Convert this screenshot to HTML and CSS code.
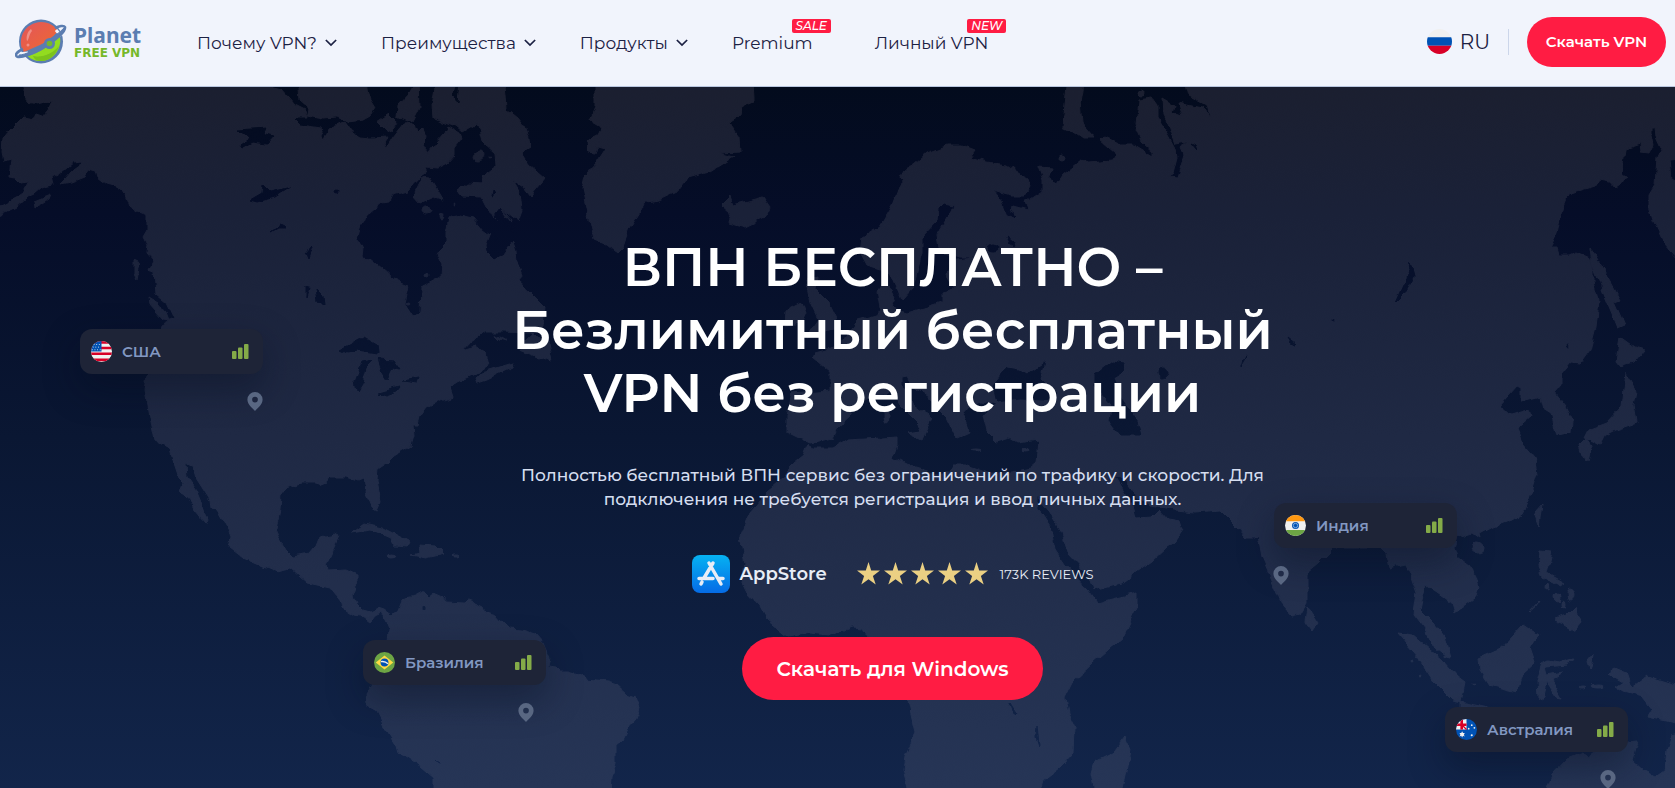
FILE: index.html
```html
<!DOCTYPE html>
<html lang="ru">
<head>
    <meta charset="UTF-8">
    <meta name="viewport" content="width=device-width, initial-scale=1.0">
    <title>Planet Free VPN</title>
    <link rel="stylesheet" href="styles.css">
</head>
<body>
    <!-- HEADER -->
    <header class="header">
        <a href="#" class="logo">
            <svg class="logo-icon" viewBox="0 0 52 46" aria-hidden="true">
                <defs>
                    <linearGradient id="planetRed" x1="0" y1="0" x2="1" y2="1">
                        <stop offset="0" stop-color="#e2555c"/>
                        <stop offset="1" stop-color="#ef6a2e"/>
                    </linearGradient>
                </defs>
                <circle cx="26" cy="22.500" r="22" fill="#5b7db1"/>
                <path d="M7 30C3 18 10 4 26 3C34 3 40 7 43 12L34 22L9 33Z" fill="url(#planetRed)"/>
                <path d="M12 36L35 24L45 18C47 30 38 42 26 42C20 42 15 40 12 36Z" fill="#93dc20"/>
                <path d="M18 37C28 39 38 34 44 27C41 36 34 42 26 42C22 42 19 40 18 37Z" fill="#7cc31c"/>
                <path d="M15 34C28 38 38 31 42 25" fill="none" stroke="#93dc20" stroke-width="4"/>
                <path d="M16 10C12 13 11 18 12 22C14 21 14 15 17 12Z" fill="#f08f86"/>
                <circle cx="13" cy="26" r="1.500" fill="#f08f86"/>
                <path d="M3 35L13 34M46 17L41 11" fill="none" stroke="#f1f4fc" stroke-width="3"/>
                <path d="M8 30C1 33 -1 37 3 38C9 39 22 32 32 26C42 20 51 12 50 8C49 6 44 7 40 9" fill="none" stroke="#5b7db1" stroke-width="2.500"/>
                <path d="M4 38C14 38 26 32 34 26C42 20 49 13 50 8C44 15 34 20 28 25C20 31 10 36 4 36Z" fill="#5b7db1" stroke="#5b7db1"/>
                <circle cx="34.500" cy="24.500" r="5.500" fill="#5b7db1"/>
                <circle cx="34.500" cy="24.500" r="2.800" fill="#76b82a"/>
            </svg>
            <span class="logo-text">
                <span class="logo-name">Planet</span>
                <span class="logo-sub">FREE VPN</span>
            </span>
        </a>
        <nav class="nav">
            <a href="#" class="nav-link">Почему VPN?
                <svg class="chevron" viewBox="0 0 14 9"><path d="M1 1L7 7L13 1"/></svg>
            </a>
            <a href="#" class="nav-link">Преимущества
                <svg class="chevron" viewBox="0 0 14 9"><path d="M1 1L7 7L13 1"/></svg>
            </a>
            <a href="#" class="nav-link">Продукты
                <svg class="chevron" viewBox="0 0 14 9"><path d="M1 1L7 7L13 1"/></svg>
            </a>
            <a href="#" class="nav-link nav-link-badge">Premium<span class="badge">SALE</span></a>
            <a href="#" class="nav-link nav-link-badge">Личный VPN<span class="badge">NEW</span></a>
        </nav>
        <div class="header-right">
            <button type="button" class="lang">
                <svg class="lang-flag" viewBox="0 0 24 24" aria-hidden="true">
                    <clipPath id="round"><circle cx="12" cy="12" r="12"/></clipPath>
                    <g clip-path="url(#round)">
                        <path d="M0 0H24V8H0Z" fill="#f0f0f0"/>
                        <path d="M0 8H24V16H0Z" fill="#0052b4"/>
                        <path d="M0 16H24V24H0Z" fill="#d80027"/>
                    </g>
                </svg>
                RU
            </button>
            <a href="#" class="button button-small">Скачать VPN</a>
        </div>
    </header>

    <!-- HERO -->
    <main class="hero">
        <svg class="map" viewBox="0 87 1675 701" preserveAspectRatio="xMidYMin slice" aria-hidden="true">
            <defs>
                <linearGradient id="sea" gradientUnits="userSpaceOnUse" x1="0" y1="87" x2="0" y2="788">
                    <stop offset="0" stop-color="#030b1d"/>
                    <stop offset=".18" stop-color="#050d28"/>
                    <stop offset=".5" stop-color="#0a1733"/>
                    <stop offset="1" stop-color="#12254a"/>
                </linearGradient>
                <linearGradient id="land" gradientUnits="userSpaceOnUse" x1="0" y1="87" x2="0" y2="788">
                    <stop offset="0" stop-color="#1b1f30"/>
                    <stop offset=".18" stop-color="#1a2138"/>
                    <stop offset=".5" stop-color="#1f2944"/>
                    <stop offset="1" stop-color="#263556"/>
                </linearGradient>
                <!-- roughens the coast line -->
                <filter id="coast" filterUnits="userSpaceOnUse" x="-10" y="77" width="1695" height="721" color-interpolation-filters="sRGB">
                    <feTurbulence type="fractalNoise" baseFrequency=".09" numOctaves="2" seed="4"/>
                    <feDisplacementMap in="SourceGraphic" scale="7" xChannelSelector="R" yChannelSelector="G"/>
                </filter>
            </defs>
            <rect x="0" y="87" width="1675" height="701" fill="url(#sea)"/>
            <g class="land" filter="url(#coast)">
                <!-- the Americas -->
                <path d="M25 77L25 97L29 102L37 104L52 101L48 110L42 117L36 115L34 119L23 117L12 128L3 138L2 152L4 161L11 159L9 177L16 178L20 182L29 181L21 195L-2 207V216L16 207L27 197L34 194L41 188L54 185L52 177L62 172L73 163L80 162L81 165L71 172L61 184L71 182L84 177L89 168L96 170L98 177L107 184L118 187L127 195L132 208L137 212L147 216L147 230L143 237L147 245L146 252L153 260L148 270L154 272L155 283L156 294L167 303L174 318L160 325L157 345L147 375L145 390L150 417L155 440L170 448L173 460L179 478L184 483L181 492L189 498L194 510L205 523L208 521L203 507L196 490L187 477L186 463L193 467L196 478L210 500L211 507L219 512L229 530L231 538L229 547L242 557L261 565L278 572L291 569L307 583L330 588L341 602L342 607L354 615L362 616L370 622L375 615L381 612L386 622L389 630L388 643L380 665L372 685L366 695L367 703L375 708L385 727L396 745L398 752L421 767L434 778V798H611L612 777L616 763V745L622 740L627 730L636 720L639 708L635 697L627 694L617 685L608 682L585 680L582 675L568 671L560 671L556 667L547 666L549 657L543 643L535 634L522 630L510 629L501 622L495 615L486 612L484 607L476 603L468 600L465 603L446 602L442 597L433 593L430 598L424 592L415 597L402 600L398 610L392 615L385 610L379 608L370 612L363 610L356 603L353 597L358 580V574L347 569L328 570L327 565L332 555L335 545L339 536L335 534L320 537L316 547L311 553L292 556L286 550L279 538L276 528L280 510L281 495L286 488L303 482L316 482L322 485L327 483L329 477L347 477L358 481L363 479L366 485L365 492L372 508L377 511L381 502L377 480L378 468L387 462L394 455L410 445L413 435L412 425L418 425L420 417L427 407L438 402L452 397L449 388L457 382L477 373L488 365L485 352L476 346L463 350L470 342L485 332L503 332L530 333L548 343L552 362L540 358L520 350L525 342L543 325L545 307L535 297L530 292L519 282L522 275L517 262L516 250L513 241L503 255L494 260L487 253L486 245L490 235L483 230L473 218L457 214L450 218L447 232V242L437 252L442 262L441 277L422 287L421 312L413 317L404 303L408 285L395 280L382 268L372 260L361 259L362 247L356 240L360 227L370 213L382 203L389 202L392 195L407 191L422 175L427 172L425 167L437 168L447 163L454 155V148L462 138L460 133L448 126L445 133L437 142L428 153L424 148L426 135L423 128L418 133L415 123L403 124L393 137L387 147L384 143L388 137L370 138L360 137L352 132L345 122L330 128L325 140L320 128L300 125L295 120L298 117L307 117L305 110L295 105L288 97L282 90L265 86V77Z"/>
                <path d="M298 77L300 100L308 107L307 115L322 118L337 117L348 122L363 120L372 115L376 108L368 95L365 77Z"/>
                <path d="M377 122L389 114L397 122L392 130L387 132L382 127Z"/>
                <path d="M418 77L410 92L398 105L397 118L407 122L413 120L419 108Z"/>
                <path d="M437 77L432 105L433 117L443 122L457 127L463 132L478 123L483 142L495 153L496 165L483 175L482 184L467 183L458 190L463 196L480 197L485 207L497 218L510 226L512 220L502 208L518 221L522 210L520 192L513 180L523 187L530 196L545 178L530 165L522 153L530 148L529 138L525 128L517 118L507 110L506 95L504 77Z"/>
                <path d="M422 177L430 178L443 200L433 197L420 203L413 195Z"/>
                <ellipse cx="479" cy="156" rx="6" ry="5"/>
                <ellipse cx="427" cy="210" rx="5" ry="3"/>
                <ellipse cx="441" cy="217" rx="2" ry="3"/>
                <ellipse cx="426" cy="275" rx="2" ry="2"/>
                <ellipse cx="408" cy="303" rx="2" ry="1"/>
                <circle cx="454" cy="205" r="1"/>
                <circle cx="490" cy="157" r="1"/>
                <path d="M476 378L483 372L513 363L512 368L487 380L478 383Z"/>
                <path d="M495 335L507 342L500 340Z"/>
                <path d="M148 297L158 303L166 312L169 320L163 319L149 303Z"/>
                <path d="M134 260L140 263L137 279L134 273Z"/>
                <path d="M35 201L50 195L48 200L36 208Z"/>
                <path d="M351 532L364 523L381 527L410 542L408 546L394 545L391 538L370 529Z"/>
                <path d="M410 555L419 553L418 545L436 546L444 554L426 558Z"/>
                <ellipse cx="392" cy="556" rx="5" ry="2"/>
                <ellipse cx="456" cy="556" rx="4" ry="1"/>
                <!-- Greenland and Iceland -->
                <path d="M595 77L595 108L590 120L602 127L598 135L587 140L588 152L596 153L598 146L606 148L597 162L585 175L582 188L587 212L593 238L607 244L618 253L623 248L630 228L640 212L645 202L660 200L677 192L688 178L710 172L734 157L719 153L740 152L739 137L729 123L740 116L742 105L754 100L753 77Z"/>
                <path d="M722 205L730 197L733 205L748 201L764 197L771 207L766 217L745 227L728 222L731 213Z"/>
                <!-- Eurasia and Africa -->
                <path d="M860 252L862 238L880 227L893 205L902 182L900 177L905 168L913 165L927 153L947 145L962 145L975 150L970 157L987 162L1007 165L1027 178L1030 187L1025 195L1010 195L992 190L1002 202L1007 215L1015 218L1018 215L1010 210L1013 206L1028 210L1025 202L1043 190V180L1038 167L1052 168L1048 180L1057 184L1063 175L1082 160L1089 162L1113 160L1115 153L1100 140L1105 138L1120 145L1133 145L1153 157L1153 152L1142 142L1135 125L1138 100L1152 98L1157 105V118L1168 135L1175 148L1177 157L1173 173L1168 177L1178 178L1185 155L1182 148L1187 142L1175 144L1168 125L1163 115L1162 98L1174 105L1172 113L1183 117L1178 102L1203 107L1210 117L1207 105L1188 95L1183 77H1690V158L1670 160L1672 180L1690 192V272L1664 243L1653 220L1649 208V195L1655 185L1657 157L1661 148L1656 137L1655 127L1651 127V135L1653 145L1649 153L1641 152L1640 143L1625 148L1622 173L1628 178L1615 187L1611 182L1599 180L1595 186L1567 195L1563 205L1557 233L1550 248L1558 248L1560 255L1569 255L1576 252L1590 258L1594 272V283L1599 300L1596 327L1590 350L1580 364L1571 363L1561 375V385L1554 393L1565 407L1572 420L1571 433L1557 436L1551 413L1543 408L1540 397L1521 402V388L1517 386L1500 405L1511 415L1528 410L1530 417L1517 428L1523 443L1535 457L1538 473L1530 498L1525 510L1512 520L1492 527L1479 534L1480 538L1473 533L1458 537L1455 548L1458 557L1473 568L1479 587L1475 598L1455 613L1452 603L1438 593L1426 585L1422 600L1420 610L1432 622L1445 637L1451 658L1447 657L1430 643L1427 630L1414 613L1417 593L1410 573L1405 564L1390 568L1387 555L1380 548H1333L1318 563L1307 572V603L1300 615L1292 617L1283 607L1272 580L1262 557L1258 535L1255 538L1247 538L1238 528L1228 518L1220 510L1195 512L1175 510L1162 507L1148 505L1133 492L1123 478L1115 477L1123 490L1133 507L1136 518L1153 517L1160 510L1168 519L1180 521L1183 530L1175 542L1167 547L1153 560L1120 583L1093 590L1087 573L1068 553L1062 533L1048 510L1037 495L1037 507L1050 527L1055 550L1065 565L1088 590L1097 603L1137 593V607L1123 637L1093 663L1073 682L1065 698L1068 715L1074 727L1073 753L1060 767L1043 780L1038 798H910L903 770L905 757L916 733L912 717L908 700L885 665L868 637L863 628L853 627L830 635L810 633L788 637L767 620L760 607L747 593L742 583L745 563L740 537L750 513L767 493L783 480L793 463L803 455L807 445L813 448L833 448L847 440L897 437V445L893 457L913 467L933 473L950 473L953 465L967 465L987 472L1013 472L1030 468L1037 462L1039 440L1018 443L1010 438L997 442L987 432L983 415L997 405L980 402L962 412L970 433L957 439L947 418L937 408L927 395L913 387L908 377L903 378V385L913 405L932 418L927 428L922 440L907 433L921 431L918 423L900 405L892 392L880 395L857 402L852 415L838 428L833 438L810 443L797 437L787 432V415L792 393L830 390V372L813 358L815 353L833 348L847 338L858 320L877 315L880 308L877 292L883 282L890 288L895 298L890 308L907 313L927 307L943 302V292L955 289L947 275L950 262L980 258L960 258L940 252L937 235L947 218L955 205L943 203L938 208L937 222L922 238V252L917 272L913 288L902 300L897 288L890 272L867 265Z"/>
                <path d="M806 280L818 277L816 290L829 303L837 320L833 328L806 337L818 320L810 303Z"/>
                <path d="M786 310L802 302L806 313L802 322L785 325Z"/>
                <path d="M1068 77L1065 105L1063 127L1073 132L1083 139L1093 139V135L1082 122L1080 102L1084 77Z"/>
                <circle cx="1061" cy="159" r="3"/>
                <circle cx="1141" cy="93" r="3"/>
                <ellipse cx="886" cy="415" rx="3" ry="8"/>
                <ellipse cx="976" cy="449" rx="6" ry="1"/>
                <ellipse cx="1025" cy="450" rx="5" ry="2"/>
                <path d="M1125 737L1130 750L1127 767L1120 798H1097L1092 773L1095 762L1113 753Z"/>
                <!-- Japan and Sakhalin -->
                <path d="M1590 248L1597 260L1610 282L1620 300L1615 302L1625 325L1618 328L1605 297L1592 263Z"/>
                <path d="M1620 337L1634 347L1645 350L1634 363L1620 367L1616 362Z"/>
                <path d="M1626 372L1636 390L1633 405L1636 423L1615 430L1595 440L1584 438L1588 430L1607 423L1622 407Z"/>
                <path d="M1580 445L1587 438L1592 445L1588 461L1583 455Z"/>
                <path d="M1593 440L1604 436L1600 444Z"/>
                <!-- South-East Asia -->
                <path d="M1535 513L1543 504L1540 527Z"/>
                <ellipse cx="1477" cy="547" rx="6" ry="5"/>
                <path d="M1308 607L1318 622L1312 631L1306 623Z"/>
                <path d="M1540 551L1552 552L1547 573L1565 583L1560 586L1542 577L1538 567Z"/>
                <ellipse cx="1547" cy="587" rx="2" ry="3"/>
                <ellipse cx="1557" cy="597" rx="3" ry="4"/>
                <ellipse cx="1570" cy="595" rx="3" ry="6"/>
                <ellipse cx="1563" cy="604" rx="2" ry="4"/>
                <path d="M1555 620L1566 616L1575 607L1582 623L1575 631L1565 625Z"/>
                <path d="M1528 613L1540 600L1536 606Z"/>
                <path d="M1479 658L1502 648L1523 625L1538 635L1530 647L1535 662L1523 673L1518 692L1490 685L1480 670Z"/>
                <path d="M1542 663L1548 660L1560 662L1573 658L1568 665L1545 667L1547 675L1563 672L1552 680L1562 698L1556 697L1547 683L1543 700L1538 697L1537 680Z"/>
                <path d="M1398 633L1412 635L1442 660L1457 677L1465 683L1461 702L1452 700L1435 683L1418 657Z"/>
                <path d="M1460 702L1485 707L1510 715L1460 712Z"/>
                <path d="M1588 660L1593 654L1592 664L1590 670Z"/>
                <ellipse cx="1582" cy="688" rx="3" ry="1"/>
                <ellipse cx="1598" cy="686" rx="7" ry="2"/>
                <circle cx="1473" cy="684" r="1"/>
                <circle cx="1420" cy="675" r="1"/>
                <circle cx="1412" cy="660" r="1"/>
                <path d="M1608 673L1615 668L1627 673L1632 687L1647 676L1690 689V726L1648 717L1652 710L1642 697L1623 692L1615 687L1623 682Z"/>
                <path d="M1543 798L1552 775L1568 758L1583 752L1588 758L1608 743L1638 740L1632 760L1645 772L1655 777L1665 770L1667 750L1672 735L1690 730V798Z"/>
            </g>
            <g class="lakes" filter="url(#coast)">
                <path d="M238 130L267 128L262 134L273 137L267 144L253 142L242 148L240 145L250 138Z"/>
                <path d="M250 200L262 193L263 185L270 192L291 187L275 197L257 202Z"/>
                <path d="M271 231L280 224L286 227L278 227Z"/>
                <path d="M316 289L322 295L323 305L318 302Z"/>
                <path d="M307 284L310 288L307 298Z"/>
                <path d="M307 253L313 246L309 258Z"/>
                <circle cx="337" cy="192" r="2"/>
                <path d="M341 349L363 337L377 345L378 353L358 350L347 352Z"/>
                <path d="M373 361L362 363L355 382L357 391L362 383L366 368Z"/>
                <path d="M378 359L393 360L400 370L393 368L387 380L382 372Z"/>
                <path d="M379 393L400 387L397 391L382 396Z"/>
                <path d="M403 380L419 377L417 382Z"/>
                <path d="M457 80L454 95L457 103L459 80Z"/>
                <path d="M495 235L498 237L494 240Z"/>
                <path d="M495 215L500 208L514 226L512 232Z"/>
                <path d="M493 190L495 193L492 195Z"/>
                <path d="M993 385L1007 368L1018 370L1027 375L1045 363L1040 378L1057 395L1045 400L1020 399L997 402Z"/>
                <path d="M1113 361L1125 363L1123 372L1113 378L1123 402L1135 418L1140 435L1120 435L1110 422L1112 405L1095 385V375Z"/>
                <ellipse cx="1163" cy="373" rx="5" ry="5"/>
                <path d="M1410 262L1414 277L1404 295L1396 303L1405 283Z"/>
                <path d="M1288 338L1297 345L1291 343Z"/>
                <path d="M1240 366L1242 359L1246 356Z"/>
                <circle cx="1334" cy="320" r="1"/>
                <circle cx="1568" cy="345" r="1"/>
                <ellipse cx="993" cy="248" rx="6" ry="4"/>
                <path d="M1007 237L1014 243L1012 247Z"/>
                <path d="M1191 144L1197 151L1195 146Z"/>
                <path d="M1037 725L1039 747L1036 738Z"/>
                <path d="M1010 702L1017 713L1013 710Z"/>
                <ellipse cx="424" cy="607" rx="1" ry="3"/>
                <path d="M436 760L441 763Z"/>
            </g>
        </svg>

        <div class="place place-usa">
            <svg class="place-flag" viewBox="0 0 24 24" aria-hidden="true">
                <g clip-path="url(#round)">
                    <path d="M0 0H24V24H0Z" fill="#f0f0f0"/>
                    <path d="M0 1.500H24M0 8H24M0 14.500H24M0 21.500H24" stroke="#d80027" stroke-width="3"/>
                    <path d="M0 0H12V12H0Z" fill="#0052b4"/>
                    <path d="M3 4H11M2 7H11M1 10H11" stroke="#f0f0f0" stroke-width="1" stroke-dasharray="1 2"/>
                </g>
            </svg>
            <span class="place-name">США</span>
            <svg class="signal" viewBox="0 0 17 15"><rect y="7" width="4.500" height="8" rx="1"/><rect x="6" y="3.500" width="4.500" height="11.500" rx="1"/><rect x="12" width="4.500" height="15" rx="1"/></svg>
            <svg class="pin" viewBox="0 0 16 20"><path fill-rule="evenodd" d="M8 0A8 8 0 0 0 0 8C0 13 5 17 8 20C11 17 16 13 16 8A8 8 0 0 0 8 0ZM8 5A3 3 0 1 1 8 11A3 3 0 1 1 8 5Z"/></svg>
        </div>
        <div class="place place-brazil">
            <svg class="place-flag" viewBox="0 0 24 24" aria-hidden="true">
                <g clip-path="url(#round)">
                    <path d="M0 0H24V24H0Z" fill="#6da544"/>
                    <path d="M12 4L22 12L12 20L2 12Z" fill="#ffda44"/>
                    <circle cx="12" cy="12" r="4.500" fill="#0052b4"/>
                    <path d="M8 11C11 10.500 14 11.500 16 13.500" fill="none" stroke="#f0f0f0" stroke-width="1.500"/>
                </g>
            </svg>
            <span class="place-name">Бразилия</span>
            <svg class="signal" viewBox="0 0 17 15"><rect y="7" width="4.500" height="8" rx="1"/><rect x="6" y="3.500" width="4.500" height="11.500" rx="1"/><rect x="12" width="4.500" height="15" rx="1"/></svg>
            <svg class="pin" viewBox="0 0 16 20"><path fill-rule="evenodd" d="M8 0A8 8 0 0 0 0 8C0 13 5 17 8 20C11 17 16 13 16 8A8 8 0 0 0 8 0ZM8 5A3 3 0 1 1 8 11A3 3 0 1 1 8 5Z"/></svg>
        </div>
        <div class="place place-india">
            <svg class="place-flag" viewBox="0 0 24 24" aria-hidden="true">
                <g clip-path="url(#round)">
                    <path d="M0 0H24V24H0Z" fill="#f0f0f0"/>
                    <path d="M0 0H24V7H0Z" fill="#ff9811"/>
                    <path d="M0 17H24V24H0Z" fill="#6da544"/>
                    <circle cx="12" cy="12" r="4" fill="#0052b4"/>
                    <circle cx="12" cy="12" r="2.500" fill="none" stroke="#8db4e2"/>
                </g>
            </svg>
            <span class="place-name">Индия</span>
            <svg class="signal" viewBox="0 0 17 15"><rect y="7" width="4.500" height="8" rx="1"/><rect x="6" y="3.500" width="4.500" height="11.500" rx="1"/><rect x="12" width="4.500" height="15" rx="1"/></svg>
            <svg class="pin" viewBox="0 0 16 20"><path fill-rule="evenodd" d="M8 0A8 8 0 0 0 0 8C0 13 5 17 8 20C11 17 16 13 16 8A8 8 0 0 0 8 0ZM8 5A3 3 0 1 1 8 11A3 3 0 1 1 8 5Z"/></svg>
        </div>
        <div class="place place-australia">
            <svg class="place-flag" viewBox="0 0 24 24" aria-hidden="true">
                <g clip-path="url(#round)">
                    <path d="M0 0H24V24H0Z" fill="#0052b4"/>
                    <path d="M0 0H12V12H0Z" fill="#f0f0f0"/>
                    <path d="M5 0H8V5H12V8H8V12H5V8H0V5H5Z" fill="#d80027"/>
                    <path d="M8 8L12 12" stroke="#d80027" stroke-width="1.500"/>
                    <path d="M7 14L8 16L10 16L9 18L10 20L8 19L7 21L6 19L4 20L5 18L4 16L6 16Z" fill="#f0f0f0"/>
                    <circle cx="18" cy="7" r="1" fill="#f0f0f0"/>
                    <circle cx="14.500" cy="11" r="1" fill="#f0f0f0"/>
                    <circle cx="21" cy="10" r="1" fill="#f0f0f0"/>
                    <circle cx="18" cy="18.500" r="1.200" fill="#f0f0f0"/>
                </g>
            </svg>
            <span class="place-name">Австралия</span>
            <svg class="signal" viewBox="0 0 17 15"><rect y="7" width="4.500" height="8" rx="1"/><rect x="6" y="3.500" width="4.500" height="11.500" rx="1"/><rect x="12" width="4.500" height="15" rx="1"/></svg>
            <svg class="pin" viewBox="0 0 16 20"><path fill-rule="evenodd" d="M8 0A8 8 0 0 0 0 8C0 13 5 17 8 20C11 17 16 13 16 8A8 8 0 0 0 8 0ZM8 5A3 3 0 1 1 8 11A3 3 0 1 1 8 5Z"/></svg>
        </div>

        <div class="content">
            <h1 class="title">ВПН БЕСПЛАТНО –<br>Безлимитный бесплатный<br>VPN без регистрации</h1>
            <p class="subtitle">Полностью бесплатный ВПН сервис без ограничений по трафику и скорости. Для<br>подключения не требуется регистрация и ввод личных данных.</p>
            <div class="store">
                <svg class="store-icon" viewBox="0 0 38 38" aria-hidden="true">
                    <defs>
                        <linearGradient id="storeBlue" x1="0" y1="0" x2="0" y2="1">
                            <stop offset="0" stop-color="#06b2f2"/>
                            <stop offset="1" stop-color="#056be6"/>
                        </linearGradient>
                    </defs>
                    <rect width="38" height="38" rx="8" fill="url(#storeBlue)"/>
                    <path d="M21 8L12 23M17 8L29 29M10 27L9 29M7 23.500H21M27 23.500H31" fill="none" stroke="#e8edf6" stroke-width="3.500" stroke-linecap="round"/>
                </svg>
                <span class="store-name">AppStore</span>
                <svg class="stars" viewBox="0 0 131 24" aria-label="5 из 5">
                    <defs>
                        <path id="star" d="M11.500 0L14.200 8.600H23L15.900 13.900L18.700 22.500L11.500 17.200L4.300 22.500L7.100 13.900L0 8.600H8.800Z"/>
                    </defs>
                    <use href="#star" x="0"/>
                    <use href="#star" x="27"/>
                    <use href="#star" x="54"/>
                    <use href="#star" x="81"/>
                    <use href="#star" x="108"/>
                </svg>
                <span class="reviews">173K REVIEWS</span>
            </div>
            <a href="#" class="button button-big">Скачать для Windows</a>
        </div>
    </main>
</body>
</html>
```
FILE: styles.css
```css
* {
    box-sizing: border-box;
}
body {
    margin: 0;
    min-height: 100vh;
    display: flex;
    flex-direction: column;
    font-family: Montserrat, Inter, "Open Sans", sans-serif;
    color: #1c2143;
}
a {
    color: inherit;
    text-decoration: none;
}

/* HEADER */
.header {
    display: flex;
    align-items: center;
    height: 87px;
    padding: 0 9px 3px 15px;
    background-color: #f1f4fc;
    border-bottom: 1px solid #b9c6de;
}
.logo {
    display: flex;
    align-items: center;
    gap: 7px;
    width: 182px;
}
.logo-icon {
    width: 52px;
    height: 46px;
}
.logo-text {
    display: flex;
    flex-direction: column;
}
.logo-name {
    font-family: "Noto Sans", sans-serif;
    font-size: 21px;
    font-weight: 700;
    line-height: 22px;
    color: #5b7db1;
}
.logo-sub {
    font-family: "DejaVu Sans", sans-serif;
    font-size: 12px;
    font-weight: 700;
    line-height: 14px;
    color: #76b82a;
}
.nav {
    display: flex;
    gap: 44px;
    padding-top: 2px;
}
.nav-link {
    display: flex;
    align-items: center;
    gap: 8px;
    font-size: 17px;
    font-weight: 400;
    line-height: 24px;
    white-space: nowrap;
}
.nav-link-badge {
    position: relative;
    padding-right: 18px;
}
.chevron {
    width: 12px;
    height: 8px;
    fill: none;
    stroke: #1c2143;
    stroke-width: 2;
}
.badge {
    position: absolute;
    top: -12px;
    right: 0;
    width: 39px;
    border-radius: 2px;
    background-color: #ff1c43;
    color: white;
    font-size: 12px;
    font-style: italic;
    font-weight: 500;
    line-height: 14px;
    text-align: center;
}
.header-right {
    display: flex;
    align-items: center;
    gap: 18px;
    margin-left: auto;
}
.lang {
    display: flex;
    align-items: center;
    gap: 8px;
    height: 26px;
    padding: 0 18px 0 0;
    border: none;
    border-right: 1px solid #ccd6ea;
    background: none;
    color: #1c2143;
    font-family: inherit;
    font-size: 20px;
    font-weight: 400;
}
.lang-flag {
    width: 25px;
    height: 25px;
}
.button {
    display: flex;
    align-items: center;
    justify-content: center;
    border-radius: 32px;
    background-color: #ff1c43;
    color: white;
    font-weight: 600;
}
.button:hover {
    background-color: #e0123a;
}
.button-small {
    width: 139px;
    height: 50px;
    font-size: 15px;
}
.button-big {
    width: 301px;
    height: 63px;
    font-size: 20px;
}

/* HERO */
.hero {
    position: relative;
    flex: 1;
    overflow: hidden;
    padding: 149px 0 86px 110px;
    background-color: #0a1733;
}
.map {
    position: absolute;
    top: 0;
    left: 0;
    width: 100%;
    height: 100%;
}
.land {
    fill: url(#land);
    stroke: url(#land);
    stroke-width: 1;
    stroke-linejoin: round;
}
.lakes {
    fill: url(#sea);
    stroke: url(#sea);
    stroke-width: 1;
    stroke-linejoin: round;
}
.content {
    position: relative;
    display: flex;
    flex-direction: column;
    align-items: center;
    text-align: center;
}
.title {
    margin: 0 0 38px;
    color: white;
    font-size: 53px;
    font-weight: 600;
    line-height: 63px;
}
.subtitle {
    margin: 0 0 44px;
    color: #d5def0;
    font-size: 17px;
    font-weight: 500;
    line-height: 24px;
}
.store {
    display: flex;
    align-items: center;
    height: 38px;
    margin-bottom: 44px;
    color: #e8edf6;
}
.store-icon {
    width: 38px;
    height: 38px;
}
.store-name {
    margin: 0 30px 0 10px;
    font-size: 18px;
    font-weight: 600;
}
.stars {
    width: 131px;
    height: 24px;
    margin-right: 12px;
    fill: #ebd083;
}
.reviews {
    font-size: 13px;
    font-weight: 400;
}

/* MAP PLACES */
.place {
    position: absolute;
    display: flex;
    align-items: center;
    width: 183px;
    height: 45px;
    padding: 0 14px 0 11px;
    border-radius: 12px;
    background-color: #1e2437;
    box-shadow: 0 14px 36px rgba(5, 12, 30, .4);
}
.place-usa {
    top: 242px;
    left: 80px;
}
.place-brazil {
    top: 553px;
    left: 363px;
}
.place-india {
    top: 416px;
    right: 218px;
}
.place-australia {
    top: 620px;
    right: 47px;
}
.place-flag {
    width: 21px;
    height: 21px;
    margin-right: 10px;
}
.place-name {
    color: #8298c2;
    font-size: 15px;
    font-weight: 600;
}
.signal {
    width: 17px;
    height: 15px;
    margin-left: auto;
    fill: #84ab48;
}
.pin {
    position: absolute;
    top: 63px;
    left: 155px;
    width: 16px;
    height: 19px;
    fill: #596782;
}
.place-usa .pin {
    left: 167px;
}
.place-india .pin {
    left: -1px;
}
```
